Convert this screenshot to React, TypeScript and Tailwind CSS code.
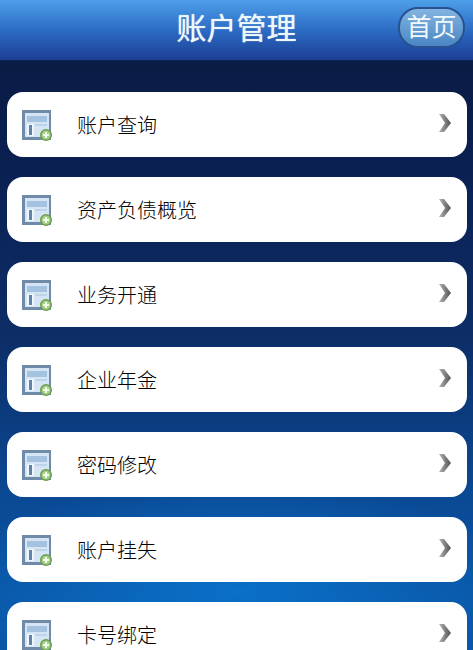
const items = ["账户查询", "资产负债概览", "业务开通", "企业年金", "密码修改", "账户挂失", "卡号绑定"];

const cjk = "font-['Liberation_Sans','Noto_Sans_CJK_SC',sans-serif]";

function FormIcon() {
  return (
    <svg width="30" height="31" viewBox="0 0 30 31" className="mt-[1px] shrink-0 blur-[0.4px]">
      <rect x="0" y="0" width="29" height="30" fill="#6f8ba8" />
      <rect x="3" y="3" width="24" height="24" fill="#d6e5f3" />
      <rect x="5" y="6" width="20" height="6" fill="#a4c3e0" />
      <rect x="5" y="14" width="7" height="12" fill="#f0f6fb" />
      <rect x="7" y="15" width="3" height="10" fill="#5f84ab" />
      <rect x="13" y="14" width="12" height="2" fill="#bcd4e9" />
      <circle cx="24" cy="25" r="6" fill="#6b9c50" />
      <circle cx="24" cy="25" r="4.5" fill="#a4d086" />
      <path d="M24 22v6M21 25h6" stroke="#f2faec" strokeWidth="2" />
    </svg>
  );
}

function Chevron() {
  return (
    <svg width="14" height="20" viewBox="0 0 14 20" className="mb-[3px] shrink-0">
      <defs>
        <linearGradient id="chev" x1="0" y1="0" x2="1" y2="0">
          <stop offset="0" stopColor="#b4b4b4" />
          <stop offset="1" stopColor="#505050" />
        </linearGradient>
      </defs>
      <path d="M1 1h5l7 9-7 9H1l6-9z" fill="url(#chev)" />
    </svg>
  );
}

export default function App() {
  return (
    <div className={`h-[650px] w-[473px] overflow-hidden bg-[radial-gradient(ellipse_300px_110px_at_50%_592px,#0a70c8,transparent),linear-gradient(to_bottom,#0a1c45_60px,#0a2052_170px,#0d2e68_340px,#0a4a95_500px,#0a55a5_600px)] ${cjk}`}>
      <header className="relative flex h-[61px] items-center justify-center border-b border-[#0d2350] bg-gradient-to-b from-[#4e9fea] via-[#2c6cc4] to-[#1d3e95]">
        <h1 className="mb-[3px] text-[30px] font-normal leading-none text-[#eef8fb] [text-shadow:0_0_1px_#eef8fb]">账户管理</h1>
        <button className="absolute right-[8px] top-[7px] flex h-[41px] w-[67px] items-center justify-center rounded-[20px] border-2 border-[#28528f] bg-gradient-to-b from-[#82b4e0] to-[#4a86c4] text-[25px] leading-none text-[#f2f9fb]">
          首页
        </button>
      </header>
      <ul className="flex flex-col gap-[20px] pl-[7px] pr-[6px] pt-[31px]">
        {items.map((item) => (
          <li key={item} className="flex h-[65px] shrink-0 items-center rounded-[16px] bg-white pl-[15px] pr-[15px]">
            <FormIcon />
            <span className="ml-[25px] flex-1 pt-[3px] text-[20px] font-light leading-none text-black">{item}</span>
            <Chevron />
          </li>
        ))}
      </ul>
    </div>
  );
}
